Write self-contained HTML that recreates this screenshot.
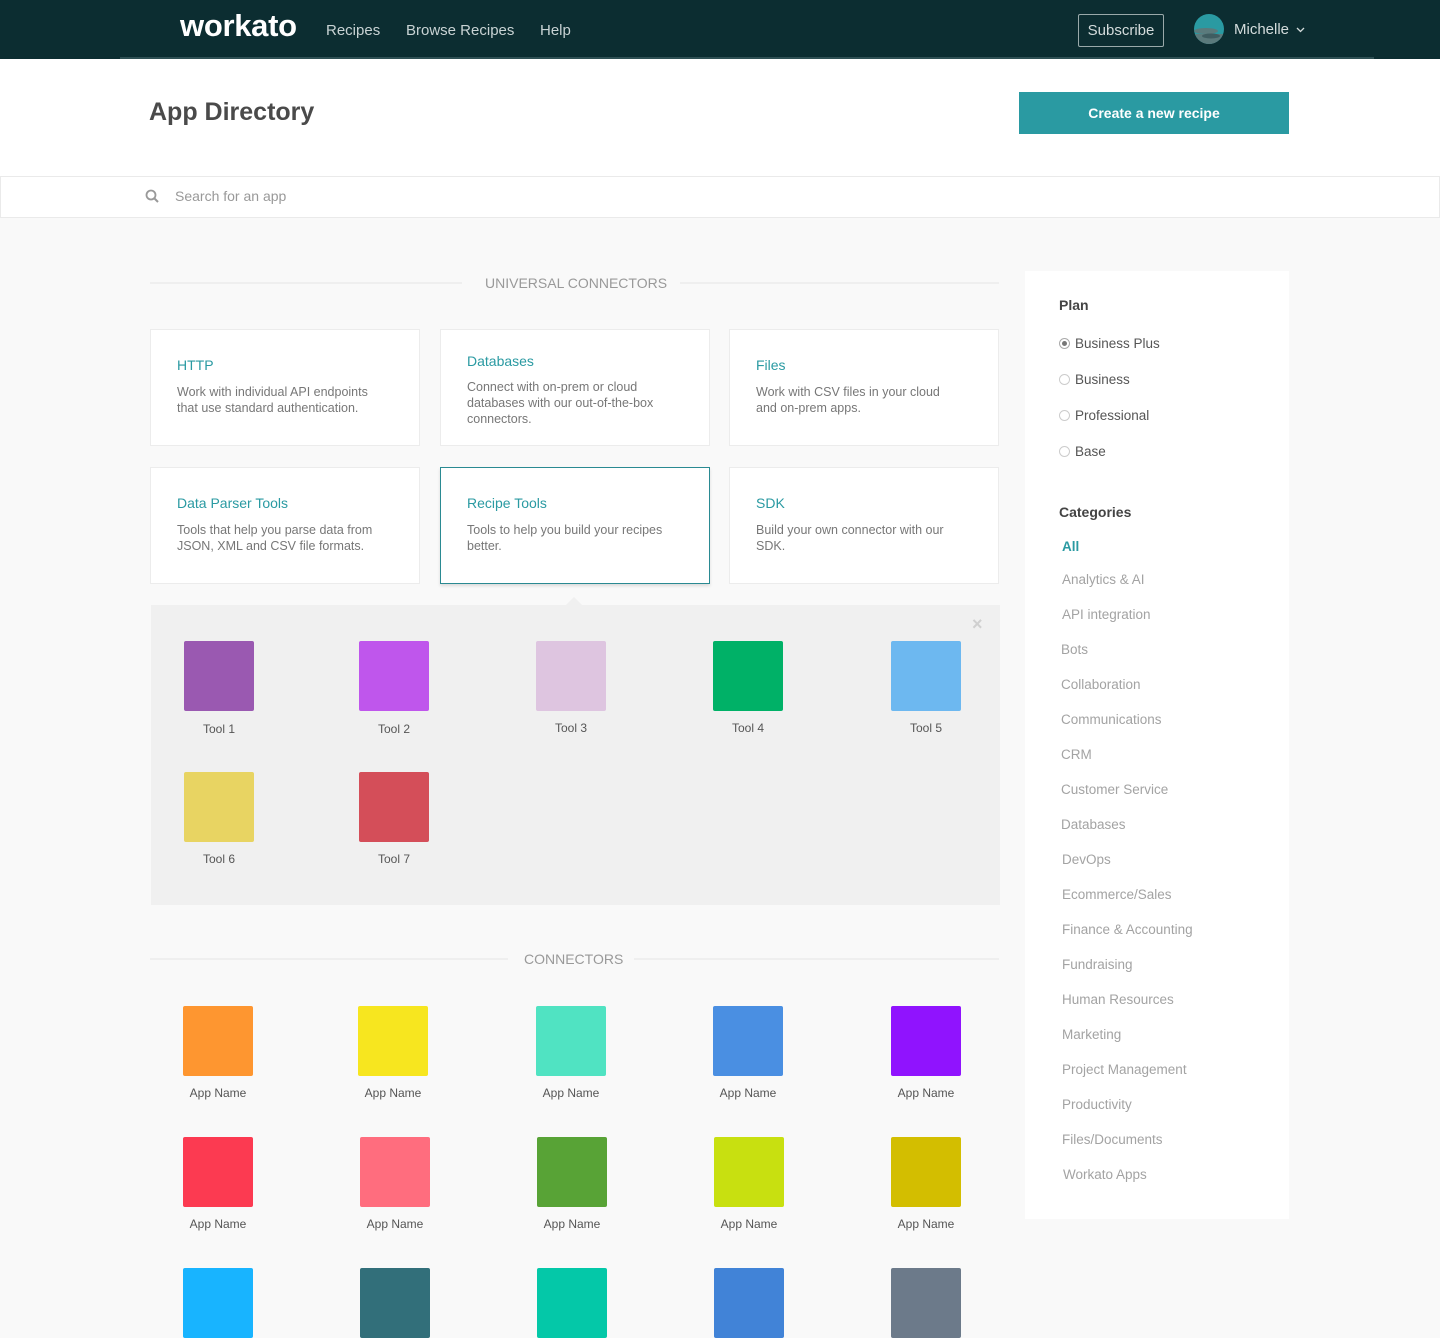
<!DOCTYPE html>
<html><head><meta charset="utf-8"><style>
*{margin:0;padding:0;box-sizing:border-box}
body{width:1440px;height:1321px;overflow:hidden;background:#f9f9f9;font-family:"Liberation Sans",sans-serif;position:relative;color:#555}
.a{position:absolute}
.nav{left:0;top:0;width:1440px;height:59px;background:#0c2d31}
.navl{left:120px;top:57px;width:1254px;height:2px;background:#2f5054}
.nl{color:#c9d3d4;font-size:15px;top:22px}
.card{background:#fff;border:1px solid #ececec;width:270px;height:117px}
.card h3{position:absolute;left:26px;font-size:14px;font-weight:normal;color:#2a9aa2}
.card p{position:absolute;left:26px;font-size:12.5px;line-height:16px;color:#777;width:208px}
.t{width:70px;height:70px;border-radius:2px}
.lb{font-size:12px;color:#555;width:120px;text-align:center}
.cat{left:1062px;font-size:13.5px;color:#a3a3a3}
.pl{left:1075px;font-size:13.5px;color:#555}
.rd{left:1059px;width:11px;height:11px;border-radius:50%;border:1px solid #ccc;background:#fff}
</style></head><body>
<div class="a nav"></div><div class="a navl"></div>
<div class="a" style="left:180px;top:8px;color:#fff;font-size:31px;font-weight:bold;letter-spacing:-0.3px">workato</div>
<div class="a nl" style="left:326px">Recipes</div>
<div class="a nl" style="left:406px">Browse Recipes</div>
<div class="a nl" style="left:540px">Help</div>
<div class="a" style="left:1078px;top:14px;width:86px;height:33px;border:1px solid #9aa9aa;border-radius:2px;color:#d4dcdc;font-size:15px;text-align:center;line-height:31px">Subscribe</div>
<svg class="a" style="left:1194px;top:14px" width="30" height="30"><defs><clipPath id="c"><circle cx="15" cy="15" r="15"/></clipPath></defs><g clip-path="url(#c)"><rect width="30" height="30" fill="#2a9aa2"/><ellipse cx="12" cy="17" rx="12" ry="3" fill="#5b7a7c"/><rect y="20" width="30" height="10" fill="#5b7a7c"/><ellipse cx="17" cy="22" rx="9" ry="2.5" fill="#3f5d61"/></g></svg>
<div class="a nl" style="left:1234px;top:21px;color:#d4dcdc">Michelle</div>
<svg class="a" style="left:1296px;top:27px" width="9" height="6"><path d="M1 1L4.5 4.5L8 1" stroke="#d4dcdc" stroke-width="1.3" fill="none"/></svg>

<div class="a" style="left:0;top:59px;width:1440px;height:118px;background:#fff"></div>
<div class="a" style="left:149px;top:98px;font-size:25px;font-weight:bold;color:#4a4a4a">App Directory</div>
<div class="a" style="left:1019px;top:92px;width:270px;height:42px;background:#2a9aa2;color:#fff;font-weight:bold;font-size:14px;text-align:center;line-height:42px">Create a new recipe</div>
<div class="a" style="left:0;top:176px;width:1440px;height:42px;background:#fff;border:1px solid #eaeaea"></div>
<svg class="a" style="left:145px;top:189px" width="14" height="14"><circle cx="6" cy="6" r="4.5" stroke="#999" stroke-width="1.8" fill="none"/><line x1="9.5" y1="9.5" x2="13" y2="13" stroke="#999" stroke-width="2"/></svg>
<div class="a" style="left:175px;top:188px;font-size:14px;color:#999">Search for an app</div>

<div class="a" style="left:150px;top:282px;width:312px;height:2px;background:#efefef"></div>
<div class="a" style="left:680px;top:282px;width:319px;height:2px;background:#efefef"></div>
<div class="a" style="left:485px;top:275px;font-size:14px;color:#999">UNIVERSAL CONNECTORS</div>

<div class="a card" style="left:150px;top:329px"><h3 style="top:27px">HTTP</h3><p style="top:54px">Work with individual API endpoints that use standard authentication.</p></div>
<div class="a card" style="left:440px;top:329px"><h3 style="top:23px">Databases</h3><p style="top:49px">Connect with on-prem or cloud databases with our out-of-the-box connectors.</p></div>
<div class="a card" style="left:729px;top:329px"><h3 style="top:27px">Files</h3><p style="top:54px">Work with CSV files in your cloud and on-prem apps.</p></div>
<div class="a card" style="left:150px;top:467px"><h3 style="top:27px">Data Parser Tools</h3><p style="top:54px">Tools that help you parse data from JSON, XML and CSV file formats.</p></div>
<div class="a card" style="left:440px;top:467px;border-color:#2a8a92;box-shadow:0 2px 3px rgba(0,0,0,.12)"><h3 style="top:27px">Recipe Tools</h3><p style="top:54px">Tools to help you build your recipes better.</p></div>
<div class="a card" style="left:729px;top:467px"><h3 style="top:27px">SDK</h3><p style="top:54px">Build your own connector with our SDK.</p></div>

<div class="a" style="left:151px;top:605px;width:849px;height:300px;background:#f0f0f0"></div>
<div class="a" style="left:566px;top:597px;width:0;height:0;border-left:8px solid transparent;border-right:8px solid transparent;border-bottom:8px solid #f0f0f0"></div>
<div class="a" style="left:972px;top:614px;font-size:18px;color:#d0d0d0;font-weight:bold">×</div>

<div class="a t" style="left:184px;top:641px;background:#9a59b1"></div><div class="a lb" style="left:159px;top:722px">Tool 1</div>
<div class="a t" style="left:359px;top:641px;background:#bf56ec"></div><div class="a lb" style="left:334px;top:722px">Tool 2</div>
<div class="a t" style="left:536px;top:641px;background:#dec5e0"></div><div class="a lb" style="left:511px;top:721px">Tool 3</div>
<div class="a t" style="left:713px;top:641px;background:#00b167"></div><div class="a lb" style="left:688px;top:721px">Tool 4</div>
<div class="a t" style="left:891px;top:641px;background:#6db8f0"></div><div class="a lb" style="left:866px;top:721px">Tool 5</div>
<div class="a t" style="left:184px;top:772px;background:#e8d462"></div><div class="a lb" style="left:159px;top:852px">Tool 6</div>
<div class="a t" style="left:359px;top:772px;background:#d44e59"></div><div class="a lb" style="left:334px;top:852px">Tool 7</div>

<div class="a" style="left:150px;top:958px;width:358px;height:2px;background:#efefef"></div>
<div class="a" style="left:634px;top:958px;width:365px;height:2px;background:#efefef"></div>
<div class="a" style="left:524px;top:951px;font-size:14px;color:#999">CONNECTORS</div>

<div class="a t" style="left:183px;top:1006px;background:#fe9630"></div><div class="a lb" style="left:158px;top:1086px">App Name</div>
<div class="a t" style="left:358px;top:1006px;background:#f7e61f"></div><div class="a lb" style="left:333px;top:1086px">App Name</div>
<div class="a t" style="left:536px;top:1006px;background:#50e3c2"></div><div class="a lb" style="left:511px;top:1086px">App Name</div>
<div class="a t" style="left:713px;top:1006px;background:#4a8fe2"></div><div class="a lb" style="left:688px;top:1086px">App Name</div>
<div class="a t" style="left:891px;top:1006px;background:#9013fe"></div><div class="a lb" style="left:866px;top:1086px">App Name</div>
<div class="a t" style="left:183px;top:1137px;background:#fc3a51"></div><div class="a lb" style="left:158px;top:1217px">App Name</div>
<div class="a t" style="left:360px;top:1137px;background:#ff6d7e"></div><div class="a lb" style="left:335px;top:1217px">App Name</div>
<div class="a t" style="left:537px;top:1137px;background:#58a336"></div><div class="a lb" style="left:512px;top:1217px">App Name</div>
<div class="a t" style="left:714px;top:1137px;background:#c8e010"></div><div class="a lb" style="left:689px;top:1217px">App Name</div>
<div class="a t" style="left:891px;top:1137px;background:#d3be00"></div><div class="a lb" style="left:866px;top:1217px">App Name</div>
<div class="a t" style="left:183px;top:1268px;background:#18b4ff"></div>
<div class="a t" style="left:360px;top:1268px;background:#326f7a"></div>
<div class="a t" style="left:537px;top:1268px;background:#04c8a8"></div>
<div class="a t" style="left:714px;top:1268px;background:#4183d7"></div>
<div class="a t" style="left:891px;top:1268px;background:#6c7a8a"></div>

<div class="a" style="left:1025px;top:271px;width:264px;height:948px;background:#fff"></div>
<div class="a" style="left:1059px;top:297px;font-size:14px;font-weight:bold;color:#444">Plan</div>
<div class="a rd" style="top:338px;border-color:#aaa"><div style="position:absolute;left:2px;top:2px;width:5px;height:5px;border-radius:50%;background:#777"></div></div><div class="a pl" style="top:336px">Business Plus</div>
<div class="a rd" style="top:374px"></div><div class="a pl" style="top:372px">Business</div>
<div class="a rd" style="top:410px"></div><div class="a pl" style="top:408px">Professional</div>
<div class="a rd" style="top:446px"></div><div class="a pl" style="top:444px">Base</div>
<div class="a" style="left:1059px;top:504px;font-size:14px;font-weight:bold;color:#444">Categories</div>
<div class="a cat" style="top:539px;color:#2a9aa2;font-weight:bold">All</div>
<div class="a cat" style="top:572px">Analytics &amp; AI</div>
<div class="a cat" style="top:607px">API integration</div>
<div class="a cat" style="top:642px;left:1061px">Bots</div>
<div class="a cat" style="top:677px;left:1061px">Collaboration</div>
<div class="a cat" style="top:712px;left:1061px">Communications</div>
<div class="a cat" style="top:747px;left:1061px">CRM</div>
<div class="a cat" style="top:782px;left:1061px">Customer Service</div>
<div class="a cat" style="top:817px;left:1061px">Databases</div>
<div class="a cat" style="top:852px">DevOps</div>
<div class="a cat" style="top:887px">Ecommerce/Sales</div>
<div class="a cat" style="top:922px">Finance &amp; Accounting</div>
<div class="a cat" style="top:957px">Fundraising</div>
<div class="a cat" style="top:992px">Human Resources</div>
<div class="a cat" style="top:1027px">Marketing</div>
<div class="a cat" style="top:1062px">Project Management</div>
<div class="a cat" style="top:1097px">Productivity</div>
<div class="a cat" style="top:1132px">Files/Documents</div>
<div class="a cat" style="top:1167px;left:1063px">Workato Apps</div>
</body></html>
